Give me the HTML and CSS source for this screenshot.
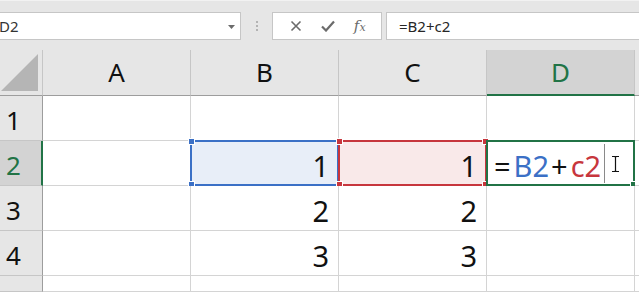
FILE: index.html
```html
<!DOCTYPE html>
<html lang="en">
<head>
  <meta charset="UTF-8" />
  <title>Sheet</title>
  <link rel="stylesheet" href="styles.css">
</head>
<body>
  <div class="formula-bar">
    <div class="name-box">
      <span>D2</span>
      <svg class="drop" width="7" height="4" viewBox="0 0 7 4"><polygon points="0,0 7,0 3.5,4" fill="#6b6b6b"/></svg>
    </div>
    <div class="grip"><i></i><i></i><i></i></div>
    <div class="fx-buttons">
      <svg width="12" height="12" viewBox="0 0 12 12"><path d="M1.5 1.5 L10.5 10.5 M10.5 1.5 L1.5 10.5" stroke="#6b6b6b" stroke-width="1.6" fill="none"/></svg>
      <svg width="14" height="12" viewBox="0 0 14 12"><path d="M1 6.5 L5 10.5 L13 1.5" stroke="#6b6b6b" stroke-width="2.2" fill="none"/></svg>
      <span class="fx">f<small>x</small></span>
    </div>
    <div class="formula-input">=B2+c2</div>
  </div>

  <div class="sheet">
    <div class="corner">
      <svg width="42" height="45" viewBox="0 0 42 45"><polygon points="1,41 38,4 38,41" fill="#b5b5b5"/></svg>
    </div>
    <div class="colhead">A</div>
    <div class="colhead">B</div>
    <div class="colhead">C</div>
    <div class="colhead active">D</div>
    <div class="colhead"></div>

    <div class="rowhead">1</div>
    <div class="cell"></div>
    <div class="cell"></div>
    <div class="cell"></div>
    <div class="cell"></div>
    <div class="cell"></div>

    <div class="rowhead active">2</div>
    <div class="cell"></div>
    <div class="cell ref-blue">1
      <div class="range blue"><b class="h tl"></b><b class="h bl"></b></div>
    </div>
    <div class="cell ref-red">1
      <div class="range red"><b class="h tl"></b><b class="h tr"></b><b class="h bl"></b><b class="h br"></b></div>
    </div>
    <div class="cell editing">
      <div class="range green"><b class="h br"></b></div>
      <span class="edit-text"><span class="op eq">=</span><span class="blue-txt">B2</span><span class="op">+</span><span class="red-txt">c2</span></span><span class="caret"></span>
      <svg class="ibeam" width="9" height="16" viewBox="0 0 9 16"><path d="M1 0.5 H3.5 Q4.5 0.5 4.5 2 V14 Q4.5 15.5 3.5 15.5 H1 M8 0.5 H5.5 Q4.5 0.5 4.5 2 M4.5 14 Q4.5 15.5 5.5 15.5 H8" stroke="#111" stroke-width="1.2" fill="none"/></svg>
    </div>
    <div class="cell"></div>

    <div class="rowhead">3</div>
    <div class="cell"></div>
    <div class="cell num">2</div>
    <div class="cell num">2</div>
    <div class="cell"></div>
    <div class="cell"></div>

    <div class="rowhead">4</div>
    <div class="cell"></div>
    <div class="cell num">3</div>
    <div class="cell num">3</div>
    <div class="cell"></div>
    <div class="cell"></div>

    <div class="rowhead"></div>
    <div class="cell"></div>
    <div class="cell"></div>
    <div class="cell"></div>
    <div class="cell"></div>
    <div class="cell"></div>
  </div>
</body>
</html>
```

FILE: styles.css
```css
body {
  margin: 0;
  background: #e6e6e6;
  font-family: "Noto Sans", "Open Sans", sans-serif;
  overflow: hidden;
  width: 639px;
  height: 292px;
}

.formula-bar {
  height: 50px;
  box-sizing: border-box;
  border-top: 1px solid #f2f2f2;
  padding-top: 11px;
  display: flex;
  align-items: flex-start;
}

.name-box {
  margin-left: -8px;
  width: 249px;
  height: 28px;
  box-sizing: border-box;
  background: #fff;
  border: 1px solid #c6c6c6;
  display: flex;
  align-items: center;
  justify-content: space-between;
  padding: 0 5px 0 6px;
  font-size: 15px;
  color: #333;
}

.name-box .drop {
  margin-top: 1px;
}

.grip {
  width: 31px;
  height: 28px;
  display: flex;
  flex-direction: column;
  align-items: center;
  justify-content: center;
  gap: 2px;
}

.grip i {
  width: 2px;
  height: 2px;
  background: #b3b3b3;
}

.fx-buttons {
  width: 110px;
  height: 28px;
  box-sizing: border-box;
  background: #fff;
  border: 1px solid #c6c6c6;
  display: flex;
  align-items: center;
  justify-content: space-around;
  padding: 0 6px 0 8px;
}

.fx {
  font-family: "DejaVu Serif", serif;
  font-style: italic;
  font-size: 15px;
  color: #6b6b6b;
}

.fx small {
  font-size: 11px;
}

.formula-input {
  margin-left: 4px;
  flex: 1;
  height: 28px;
  box-sizing: border-box;
  background: #fff;
  border: 1px solid #c6c6c6;
  border-right: none;
  padding-left: 12px;
  font-size: 15px;
  line-height: 26px;
  color: #262626;
}

.sheet {
  display: grid;
  grid-template-columns: 43px repeat(4, 148px) 20px;
  grid-template-rows: 46px repeat(4, 45px) 16px;
  color: #111;
}

.corner, .colhead {
  background: #e6e6e6;
  border-right: 1px solid #c6c6c6;
  border-bottom: 1px solid #9d9d9d;
  box-sizing: border-box;
}

.colhead {
  display: flex;
  align-items: center;
  justify-content: center;
  font-size: 26px;
  padding-bottom: 2px;
}

.colhead.active {
  background: #d3d3d3;
  color: #217346;
  border-bottom: 2px solid #217346;
  padding-bottom: 1px;
}

.rowhead {
  background: #e6e6e6;
  border-right: 1px solid #9d9d9d;
  border-bottom: 1px solid #c6c6c6;
  box-sizing: border-box;
  font-size: 26px;
  padding-left: 6px;
  line-height: 48px;
}

.rowhead.active {
  background: #d3d3d3;
  color: #217346;
  border-right: 2px solid #217346;
}

.cell {
  position: relative;
  background: #fff;
  border-right: 1px solid #d4d4d4;
  border-bottom: 1px solid #d4d4d4;
  box-sizing: border-box;
  font-size: 29px;
  line-height: 50px;
  text-align: right;
  padding-right: 9px;
}

.ref-blue {
  background: #e8eef8;
}

.ref-red {
  background: #f9e9e9;
}

.range {
  position: absolute;
  top: -1px;
  left: -1px;
  right: -1px;
  bottom: -1px;
  border: 2px solid;
}

.range.blue { border-color: #3b70c6; }
.range.red { border-color: #c7363d; }
.range.green { border-color: #217346; }

.h {
  position: absolute;
  width: 5px;
  height: 5px;
  border: 1px solid #fff;
}

.blue .h { background: #3b70c6; }
.red .h { background: #c7363d; }
.green .h { background: #217346; }

.h.tl { top: -4px; left: -4px; }
.h.tr { top: -4px; right: -4px; }
.h.bl { bottom: -4px; left: -4px; }
.h.br { bottom: -4px; right: -4px; }

.editing {
  text-align: left;
  padding-left: 7px;
  display: flex;
  align-items: flex-start;
}

.edit-text {
  line-height: 50px;
}

.op {
  margin: 0 3px 0 2px;
}

.op.eq {
  margin: 0 3px 0 0;
}

.blue-txt { color: #3b70c6; }
.red-txt { color: #c7363d; }

.caret {
  width: 1px;
  height: 39px;
  margin-top: 3px;
  margin-left: 3px;
  background: #8a8a8a;
}

.ibeam {
  margin-left: 6px;
  margin-top: 15px;
}
```
